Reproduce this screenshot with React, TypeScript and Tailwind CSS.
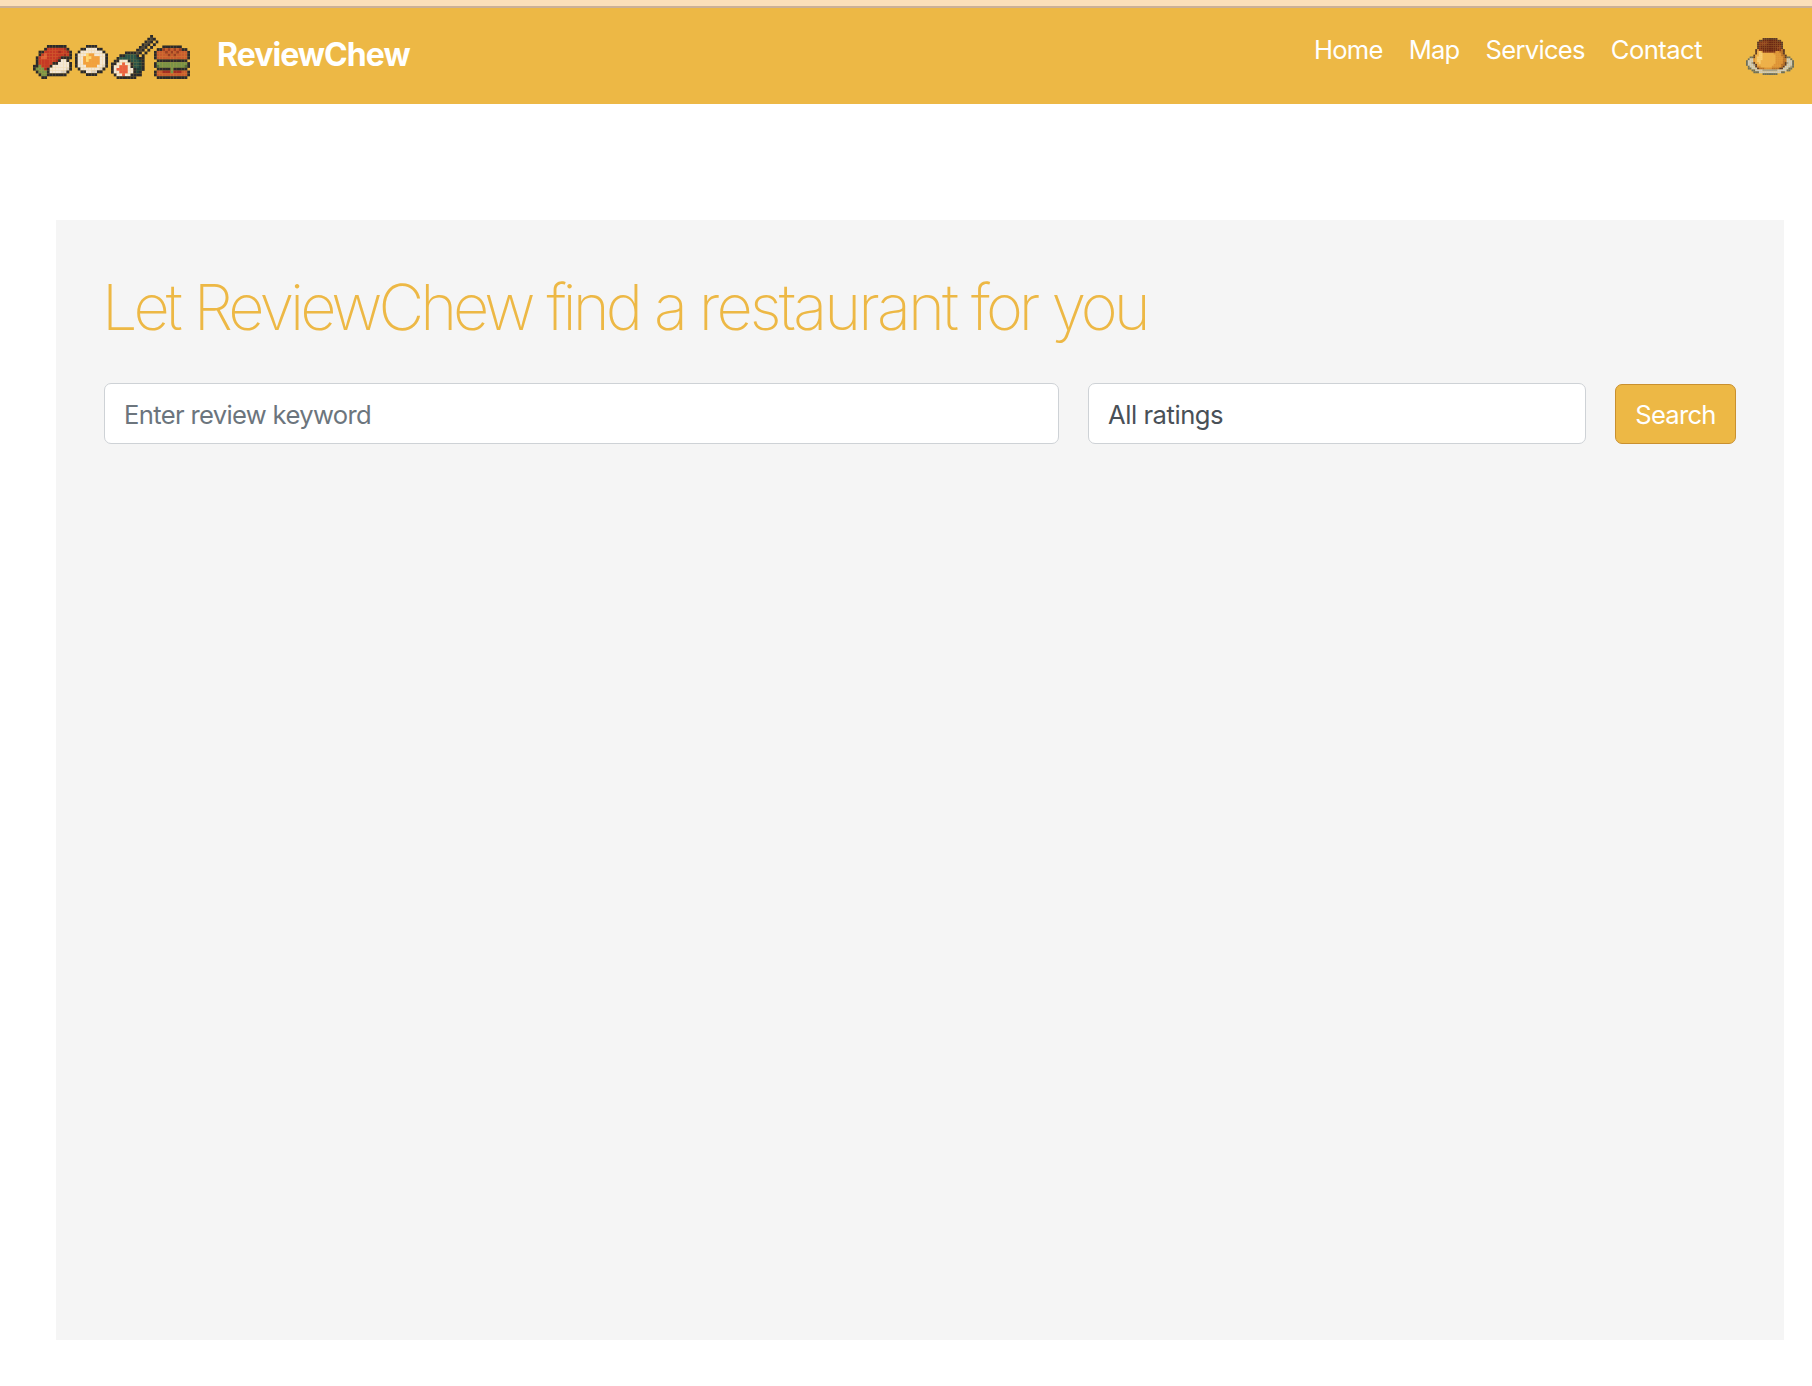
const palette: Record<string, string> = {
  K: "#2b2a2b",
  D: "#4d463a",
  R: "#c63a25",
  r: "#a52d22",
  o: "#e0603a",
  W: "#f3e7d6",
  w: "#ddd2c2",
  G: "#7b9447",
  g: "#55713a",
  Y: "#ffd873",
  O: "#f2a03e",
  T: "#2b5548",
  t: "#1f3f38",
  S: "#ea6043",
  B: "#c85c2e",
  b: "#9a3f22",
  d: "#5d3a26",
  c: "#6b2815",
  C: "#84371b",
  p: "#eeb04b",
  P: "#f7cd74",
  q: "#dd9237",
  Q: "#b8702a",
  e: "#6c6f5c",
  l: "#cfccbc",
  m: "#a3a08e",
};

const sushi = [
  ".....KKKKKKK..",
  "....KRRRRRRrK.",
  "..KKRRRRRrRRrK",
  "..KRoRRRRRRrRK",
  ".KRooRRRRrKKKK",
  ".KRRRRRRrKWWK.",
  ".KRRRRRKKWWWWK",
  "KKGRRRKWWWWWWK",
  "KGGGrKWWWWWWwK",
  ".KGGGKWWWWwwK.",
  "..KGGKKKKKKK..",
  "...KK.........",
];

const egg = [
  "....KKKK....",
  "..KKWWWWKK..",
  ".KWWWWWWWWK.",
  "KWWWYOOWWWWK",
  "KWWOYYOOOWWK",
  "KWWOYOOOOWWK",
  "KWWOOOOOOWWK",
  "KWWWOOOOWWwK",
  ".KWWWWWWWwK.",
  "..KKWWwwKK..",
  "....KKKK....",
];

const roll = [
  "..............K..",
  ".............KDK.",
  "............KDK.K",
  "...........KDK.K.",
  "..........KDK.K..",
  ".........KDK.K...",
  ".....KKKKDK.K....",
  "...KKTTTTK.K.....",
  "..KTTTTTTtKK.....",
  ".KKWWWKTTTtK.....",
  "KKWWSWWKTTtK.....",
  "KWWSSSWKTTtK.....",
  "KWSSSSWWKttK.....",
  "KWWSSSWWKtK......",
  ".KWWSWWKKKK......",
  "..KKKKKKK........",
];

const burger = [
  "...KKKKKKK...",
  ".KKbBbBbBbKK.",
  "KBBBbBbBbBBBK",
  "KBBBBbBbBBBBK",
  "KBBBBBBBBBBBK",
  ".KKKKKKKKKKK.",
  "KGGGGGGGGGGGK",
  "KgGGGGGGGGGgK",
  ".KKKKKGKKKKK.",
  "KBBrrrGrrrBBK",
  "KBBBBBBBBBBBK",
  ".KKKKKKKKKKK.",
];

const pudding = [
  ".........dddddddd.........",
  ".......ddccccccccdd.......",
  "......dCCCCCcccccccd......",
  "......dCCCCccccccccd......",
  "......dCccccccccccCd......",
  "......dCcccccccccCCd......",
  ".....dqCCcccccccccCQd.....",
  ".....dpPpCCCCCCCqqQQd.....",
  ".....dpPPppppppqqqqQd.....",
  "....dppPPpppppppqqqQQd....",
  "..eedpPPPpppppppqqqqQdee..",
  ".ellqpPPPpppppppqqqqQQlle.",
  "elllqpPPppppppppqqqqQQllle",
  "ellmdppPppppppppqqqqQdmlle",
  "elllmdpppppppppqqqqQQdllle",
  ".ellldqqppppppqqqqqQdlllme",
  ".eellldQQQqqqqQQQQddlllee.",
  "...eellllmmmmmmmmlllllee..",
  "....eeellllllllllllee.....",
  ".........eeeeeeee.........",
];

type SpriteProps = { rows: string[]; x: number; y: number; width: number; height: number };

function Sprite({ rows, x, y, width, height }: SpriteProps) {
  return (
    <svg
      x={x}
      y={y}
      width={width}
      height={height}
      viewBox={`0 0 ${rows[0].length} ${rows.length}`}
      preserveAspectRatio="none"
    >
      {rows.flatMap((row, r) =>
        [...row].map((cell, c) =>
          cell === "." ? null : (
            <rect key={`${r}-${c}`} x={c} y={r} width={1.04} height={1.04} fill={palette[cell]} />
          ),
        ),
      )}
    </svg>
  );
}

function FoodLogo() {
  return (
    <svg width={158} height={45} viewBox="0 0 158 45" aria-hidden="true" className="mt-[35px] shrink-0">
      <Sprite rows={sushi} x={0} y={10} width={39} height={34} />
      <Sprite rows={egg} x={42} y={10} width={33} height={31} />
      <Sprite rows={roll} x={78} y={0} width={47.5} height={44} />
      <Sprite rows={burger} x={121} y={10.3} width={36} height={33.7} />
    </svg>
  );
}

function Header() {
  return (
    <header className="flex h-[98px] items-start border-t-2 border-[#cbb098] bg-[#edb845] pl-[33px] pr-[18.5px] text-white">
      <div className="-mt-2 flex items-start">
        <FoodLogo />
        <a className="ml-[26px] mt-[35px] text-[32px] leading-[40px] font-bold tracking-[-0.95px]">ReviewChew</a>
      </div>
      <nav className="-mt-2 ml-auto flex items-start text-[25.6px] leading-[36px]">
        <a className="mt-[32px] mr-[26px] tracking-[-0.75px]">Home</a>
        <a className="mt-[32px] mr-[26px] tracking-[-0.75px]">Map</a>
        <a className="mt-[32px] mr-[26px] tracking-[-0.72px]">Services</a>
        <a className="mt-[32px] mr-[43.5px] tracking-[-0.55px]">Contact</a>
        <svg width={48} height={37} viewBox="0 0 48 37" aria-hidden="true" className="mt-[38px]">
          <Sprite rows={pudding} x={0} y={0} width={48} height={37} />
        </svg>
      </nav>
    </header>
  );
}

export default function App() {
  return (
    <div className="min-h-[1386px] bg-white font-['Inter',sans-serif]">
      <div className="h-[6px] bg-[#fbdfba]" />
      <Header />
      <main className="mt-[116px] ml-[56px] h-[1120px] w-[1728px] bg-[#f5f5f5] px-[48px] pt-[48px]">
        <h1 className="-ml-[2px] pt-px text-[63px] leading-[77px] font-[250] tracking-[-4px] [word-spacing:1.3px] whitespace-nowrap text-[#edb845]">
          Let ReviewChew find a <span className="tracking-[-2.9px]">restaurant</span> for you
        </h1>
        <form className="mt-[37px] flex items-start">
          <input
            type="text"
            placeholder="Enter review keyword"
            className="h-[61px] w-[955px] rounded-[7px] border border-[#ced2d6] bg-white px-[19px] pt-[2px] text-[25.6px] tracking-[-0.66px] placeholder:text-[#6c757d]"
          />
          <div className="ml-[29px] flex h-[61px] w-[498px] items-center rounded-[7px] border border-[#ced2d6] bg-white px-[19px] pt-[3px] text-[25.6px] tracking-[-0.46px] text-[#495057]">
            All ratings
          </div>
          <button
            type="button"
            className="mt-px ml-[29px] h-[60px] w-[121px] rounded-[7px] border border-[#c9902f] bg-[#edb845] pt-[2px] text-[25.6px] tracking-[-0.75px] text-white"
          >
            Search
          </button>
        </form>
      </main>
    </div>
  );
}
